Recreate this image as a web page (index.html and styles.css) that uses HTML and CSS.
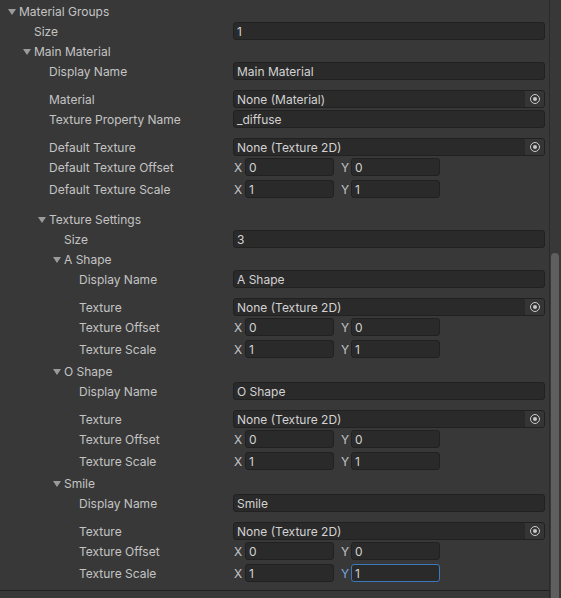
FILE: index.html
```html
<!DOCTYPE html>
<html lang="en">
<head>
    <meta charset="UTF-8">
    <title>Inspector</title>
    <link rel="stylesheet" href="styles.css">
</head>
<body>
<div class="inspector">
    <div class="panel">
        <div class="row"><span class="label l0 fold">Material Groups</span></div>
        <div class="row"><span class="label l1">Size</span><span class="field">1</span></div>
        <div class="row"><span class="label l1 fold">Main Material</span></div>
        <div class="row"><span class="label l2">Display Name</span><span class="field">Main Material</span></div>
        <div class="gap"></div>
        <div class="row"><span class="label l2">Material</span><span class="field obj"><span class="val">None (Material)</span><span class="pick"><i></i></span></span></div>
        <div class="row"><span class="label l2">Texture Property Name</span><span class="field">_diffuse</span></div>
        <div class="gap"></div>
        <div class="row"><span class="label l2">Default Texture</span><span class="field obj"><span class="val">None (Texture 2D)</span><span class="pick"><i></i></span></span></div>
        <div class="row vec"><span class="label l2">Default Texture Offset</span><span class="axis">X</span><span class="num">0</span><span class="axis y">Y</span><span class="num">0</span></div>
        <div class="row vec"><span class="label l2">Default Texture Scale</span><span class="axis">X</span><span class="num">1</span><span class="axis y">Y</span><span class="num">1</span></div>
        <div class="gap"></div>
        <div class="row"><span class="label l2 fold">Texture Settings</span></div>
        <div class="row"><span class="label l3">Size</span><span class="field">3</span></div>

        <div class="row"><span class="label l3 fold">A Shape</span></div>
        <div class="row"><span class="label l4">Display Name</span><span class="field">A Shape</span></div>
        <div class="gap"></div>
        <div class="row"><span class="label l4">Texture</span><span class="field obj"><span class="val">None (Texture 2D)</span><span class="pick"><i></i></span></span></div>
        <div class="row vec"><span class="label l4">Texture Offset</span><span class="axis">X</span><span class="num">0</span><span class="axis y">Y</span><span class="num">0</span></div>
        <div class="row vec"><span class="label l4">Texture Scale</span><span class="axis">X</span><span class="num">1</span><span class="axis y">Y</span><span class="num">1</span></div>

        <div class="row"><span class="label l3 fold">O Shape</span></div>
        <div class="row"><span class="label l4">Display Name</span><span class="field">O Shape</span></div>
        <div class="gap"></div>
        <div class="row"><span class="label l4">Texture</span><span class="field obj"><span class="val">None (Texture 2D)</span><span class="pick"><i></i></span></span></div>
        <div class="row vec"><span class="label l4">Texture Offset</span><span class="axis">X</span><span class="num">0</span><span class="axis y">Y</span><span class="num">0</span></div>
        <div class="row vec"><span class="label l4">Texture Scale</span><span class="axis">X</span><span class="num">1</span><span class="axis y">Y</span><span class="num">1</span></div>

        <div class="row"><span class="label l3 fold">Smile</span></div>
        <div class="row"><span class="label l4">Display Name</span><span class="field">Smile</span></div>
        <div class="gap"></div>
        <div class="row"><span class="label l4">Texture</span><span class="field obj"><span class="val">None (Texture 2D)</span><span class="pick"><i></i></span></span></div>
        <div class="row vec"><span class="label l4">Texture Offset</span><span class="axis">X</span><span class="num">0</span><span class="axis y">Y</span><span class="num">0</span></div>
        <div class="row vec"><span class="label l4">Texture Scale</span><span class="axis">X</span><span class="num">1</span><span class="axis y focus">Y</span><span class="num focus">1</span></div>

        <div class="bottom-line"></div>
    </div>
    <div class="scrollbar"><div class="thumb"></div></div>
</div>
</body>
</html>
```

FILE: styles.css
```css
body{
    margin: 0;
    background: #383838;
    font-family: Inter, "Noto Sans", sans-serif;
    font-size: 12px;
    color: #c4c4c4;
    overflow: hidden;
}
.inspector{
    display: flex;
    height: 598px;
}
.panel{
    width: 549px;
    padding-top: 1px;
    border-right: 1px solid #2b2b2b;
}
.row{
    display: flex;
    align-items: center;
    height: 18px;
    padding: 1px 0;
}
.row.vec{
    padding-bottom: 3px;
}
.gap{
    height: 8px;
}
.label{
    flex: none;
    width: 233px;
    box-sizing: border-box;
    white-space: nowrap;
}
.l0{ padding-left: 19px; }
.l1{ padding-left: 34px; }
.l2{ padding-left: 49px; }
.l3{ padding-left: 64px; }
.l4{ padding-left: 79px; }
/* foldout arrow */
.fold::before{
    content: "";
    display: inline-block;
    width: 0;height: 0;
    border-left: 4px solid transparent;
    border-right: 4px solid transparent;
    border-top: 6px solid #9b9b9b;
    margin-left: -11px;
    margin-right: 3px;
    vertical-align: 1px;
}
.field{
    width: 312px;
    height: 18px;
    box-sizing: border-box;
    background: #2a2a2a;
    border: 1px solid #212121;
    border-radius: 3px;
    padding-left: 3px;
    color: #d2d2d2;
    line-height: 17px;
    white-space: nowrap;
}
.obj{
    display: flex;
    padding-left: 0;
    overflow: hidden;
}
.obj .val{
    flex: 1;
    padding-left: 3px;
}
.pick{
    width: 19px;
    height: 16px;
    background: #353535;
    display: flex;
    align-items: center;
    justify-content: center;
}
.pick i{
    width: 8px;height: 8px;
    border: 1px solid #c8c8c8;
    border-radius: 50%;
    display: flex;
    align-items: center;
    justify-content: center;
}
.pick i::after{
    content: "";
    width: 4px;height: 4px;
    border-radius: 50%;
    background: #c8c8c8;
}
.axis{
    width: 12px;
    padding-left: 1px;
    box-sizing: border-box;
}
.axis.y{
    width: 10px;
    padding-left: 0;
    margin-left: 7px;
}
.num{
    width: 89px;
    height: 18px;
    box-sizing: border-box;
    background: #2a2a2a;
    border: 1px solid #212121;
    border-radius: 3px;
    padding-left: 3px;
    color: #d2d2d2;
    line-height: 17px;
}
.axis.focus{
    color: #7aa6df;
}
.num.focus{
    border-color: #3a79bb;
}
.bottom-line{
    margin-top: 5px;
    height: 1px;
    background: #1f1f1f;
}
.scrollbar{
    flex: 1;
    padding-top: 253px;
    padding-left: 1px;
    padding-right: 2px;
}
.thumb{
    height: 360px;
    background: #5f5f5f;
    border-radius: 5px 5px 0 0;
}
```
